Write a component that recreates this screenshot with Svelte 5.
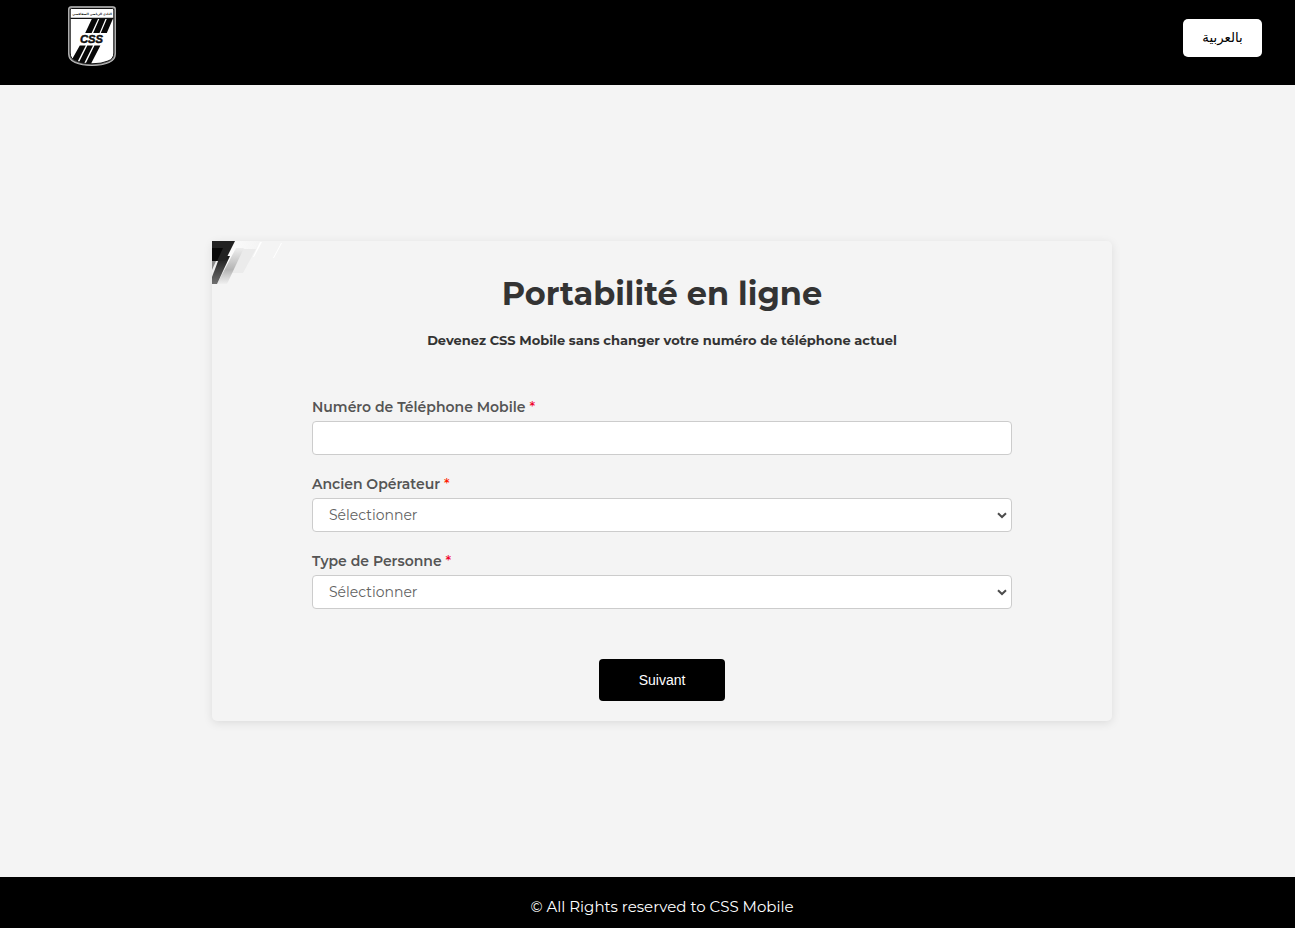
<script>
  const fields = [
    { label: 'Numéro de Téléphone Mobile', tone: 'crimson', kind: 'input' },
    { label: 'Ancien Opérateur', tone: 'red', kind: 'select' },
    { label: 'Type de Personne', tone: 'crimson', kind: 'select' }
  ];
</script>

<div class="page">
  <header>
    <svg class="logo" width="48" height="61" viewBox="0 0 48 61">
      <path d="M3 .8H45Q47.3 .8 47.3 3V48Q47.3 54 41 56.5Q34 59.5 24 59.5Q14 59.5 7 56.5Q.7 54 .7 48V3Q.7 .8 3 .8Z" fill="#777" stroke="#bbb" stroke-width="1.2" />
      <path d="M3.5 2.5H44.5Q45.8 2.5 45.8 4V47Q45.8 53 40 55Q34 57.8 24 57.8Q14 57.8 8 55Q2.2 53 2.2 47V4Q2.2 2.5 3.5 2.5Z" fill="#fff" stroke="#111" stroke-width="1" />
      <path d="M2.5 12.3H45.5" stroke="#111" stroke-width="1.3" />
      <text class="club" x="24" y="9" text-anchor="middle">النادي الرياضي الصفاقسي</text>
      <g fill="#080808">
        <path d="M23.8 13H30L23.6 27H17.2ZM31.3 13H37.4L31.5 27H25.2ZM38.8 13H44.8L38.8 27H32.8Z" />
        <path d="M11.8 39.5H17.8L9.7 55.5L4.2 53ZM19.3 39.5H25L16.2 57.3L11 56.3ZM26.5 39.5H32.4L23 57.8H17.6Z" />
      </g>
      <text class="css" x="12" y="37.4" textLength="23" lengthAdjust="spacingAndGlyphs">CSS</text>
    </svg>
    <button class="lang" lang="ar">بالعربية</button>
  </header>

  <main>
    <section class="card">
      <svg class="corner" width="76" height="43" viewBox="0 0 76 43">
        <defs>
          <linearGradient id="fade" x1="0" y1="0" x2="1" y2="0">
            <stop offset="0" stop-color="#fff" /><stop offset="1" stop-color="#f4f4f4" />
          </linearGradient>
          <linearGradient id="band" x1="0" y1="0" x2="0" y2="1">
            <stop offset="0" stop-color="#eee" /><stop offset=".6" stop-color="#b4b4b4" /><stop offset="1" stop-color="#f0f0f0" />
          </linearGradient>
          <linearGradient id="dark" x1="0" y1="0" x2="0" y2="1">
            <stop offset="0" stop-color="#171717" /><stop offset="1" stop-color="#707070" />
          </linearGradient>
        </defs>
        <path d="M23 0H48L30 32H4Z" fill="url(#fade)" />
        <path d="M31 8H44L31 32H20Z" fill="#ebebeb" />
        <path d="M24 7H32L15 43H5Z" fill="url(#band)" />
        <path d="M0 20H7L0 38Z" fill="#888" />
        <path d="M4 20H9L1 39H0V29Z" fill="#eee" />
        <path d="M8 15H18L5 43H0V36Z" fill="url(#dark)" />
        <path d="M0 0H23L13 20H0Z" fill="#222" />
        <path d="M0 7H11L5 20H0Z" fill="#080808" />
        <path d="M48 1H50L42 16H41ZM69 2H70L62 17H61Z" fill="#fff" />
      </svg>
      <h1>Portabilité en ligne</h1>
      <p class="lead">Devenez CSS Mobile sans changer votre numéro de téléphone actuel</p>
      <form>
        {#each fields as f, i}
          <div class="field">
            <label for={'f' + i}>{f.label} <span class={f.tone}>*</span></label>
            {#if f.kind === 'input'}
              <input id={'f' + i} type="text" />
            {:else}
              <div class="picker">
                <select id={'f' + i}><option>Sélectionner</option></select>
                <svg width="10" height="7" viewBox="0 0 10 7"><path d="M1 1.2L5 5L9 1.2" fill="none" stroke="#4c4c4c" stroke-width="2" /></svg>
              </div>
            {/if}
          </div>
        {/each}
        <button class="next" type="button">Suivant</button>
      </form>
    </section>
  </main>

  <footer><span>© All Rights reserved to CSS Mobile</span></footer>
</div>

<style>
  :global(body) { margin: 0; background: #f4f4f4; }
  .page {
    height: 928px;
    display: flex;
    flex-direction: column;
    overflow: hidden;
    background: #f4f4f4;
    font-family: Montserrat, Inter, sans-serif;
  }
  header {
    height: 85px;
    flex: none;
    box-sizing: border-box;
    padding: 6px 33px 0 68px;
    display: flex;
    justify-content: space-between;
    align-items: flex-start;
    background: #000;
  }
  .logo { display: block; }
  .club { font: bold 3px "DejaVu Sans", sans-serif; }
  .css { font: italic bold 11.5px "Liberation Sans", sans-serif; fill: #111; stroke: #111; stroke-width: .5px; }
  .lang {
    width: 79px;
    height: 38px;
    margin-top: 13px;
    padding: 0 0 2px;
    border: 0;
    border-radius: 5px;
    background: #fff;
    color: #000;
    font: 13.3px "Liberation Sans", "DejaVu Sans", sans-serif;
  }
  main { flex: 1; padding: 156px 0 0 29px; }
  .card {
    position: relative;
    width: 900px;
    height: 480px;
    box-sizing: border-box;
    margin: 0 auto;
    padding: 32px 100px 20px;
    border-radius: 5px;
    background: #f4f4f4;
    box-shadow: 0 2px 10px rgba(0, 0, 0, .1);
  }
  .corner { position: absolute; left: 0; top: 0; }
  h1 {
    margin: 0;
    text-align: center;
    white-space: nowrap;
    color: #333;
    font-size: 32px;
    line-height: 42px;
    font-weight: 700;
  }
  .lead {
    margin: 15px 0 0;
    text-align: center;
    white-space: nowrap;
    color: #333;
    font-size: 13px;
    line-height: 20px;
    font-weight: 700;
  }
  form { display: flex; flex-direction: column; margin-top: 48px; }
  .field { height: 77px; display: flex; flex-direction: column; }
  label { height: 23px; line-height: 19px; font-size: 14px; font-weight: 600; color: #555; white-space: nowrap; }
  label span { font-weight: 500; }
  label .crimson { color: #f0002c; }
  label .red { color: #ff1a00; }
  input, select {
    width: 100%;
    height: 34px;
    box-sizing: border-box;
    border: 1px solid #ccc;
    border-radius: 4px;
    background: #fff;
    color: #626262;
    font: 400 14px Montserrat, Inter, sans-serif;
  }
  .picker { display: grid; align-items: center; }
  .picker > * { grid-area: 1 / 1; }
  .picker svg { justify-self: end; margin-right: 5px; pointer-events: none; }
  select { appearance: none; padding: 0 16px; }
  .next {
    align-self: center;
    width: 126px;
    height: 42px;
    margin-top: 30px;
    border: 0;
    border-radius: 4px;
    background: #000;
    color: #fff;
    font: 14px "Liberation Sans", Arial, sans-serif;
  }
  footer {
    height: 51px;
    flex: none;
    box-sizing: border-box;
    padding: 20px 0 0 29px;
    text-align: center;
    background: #000;
    color: #fff;
    font-size: 15px;
    line-height: 20px;
  }
</style>
